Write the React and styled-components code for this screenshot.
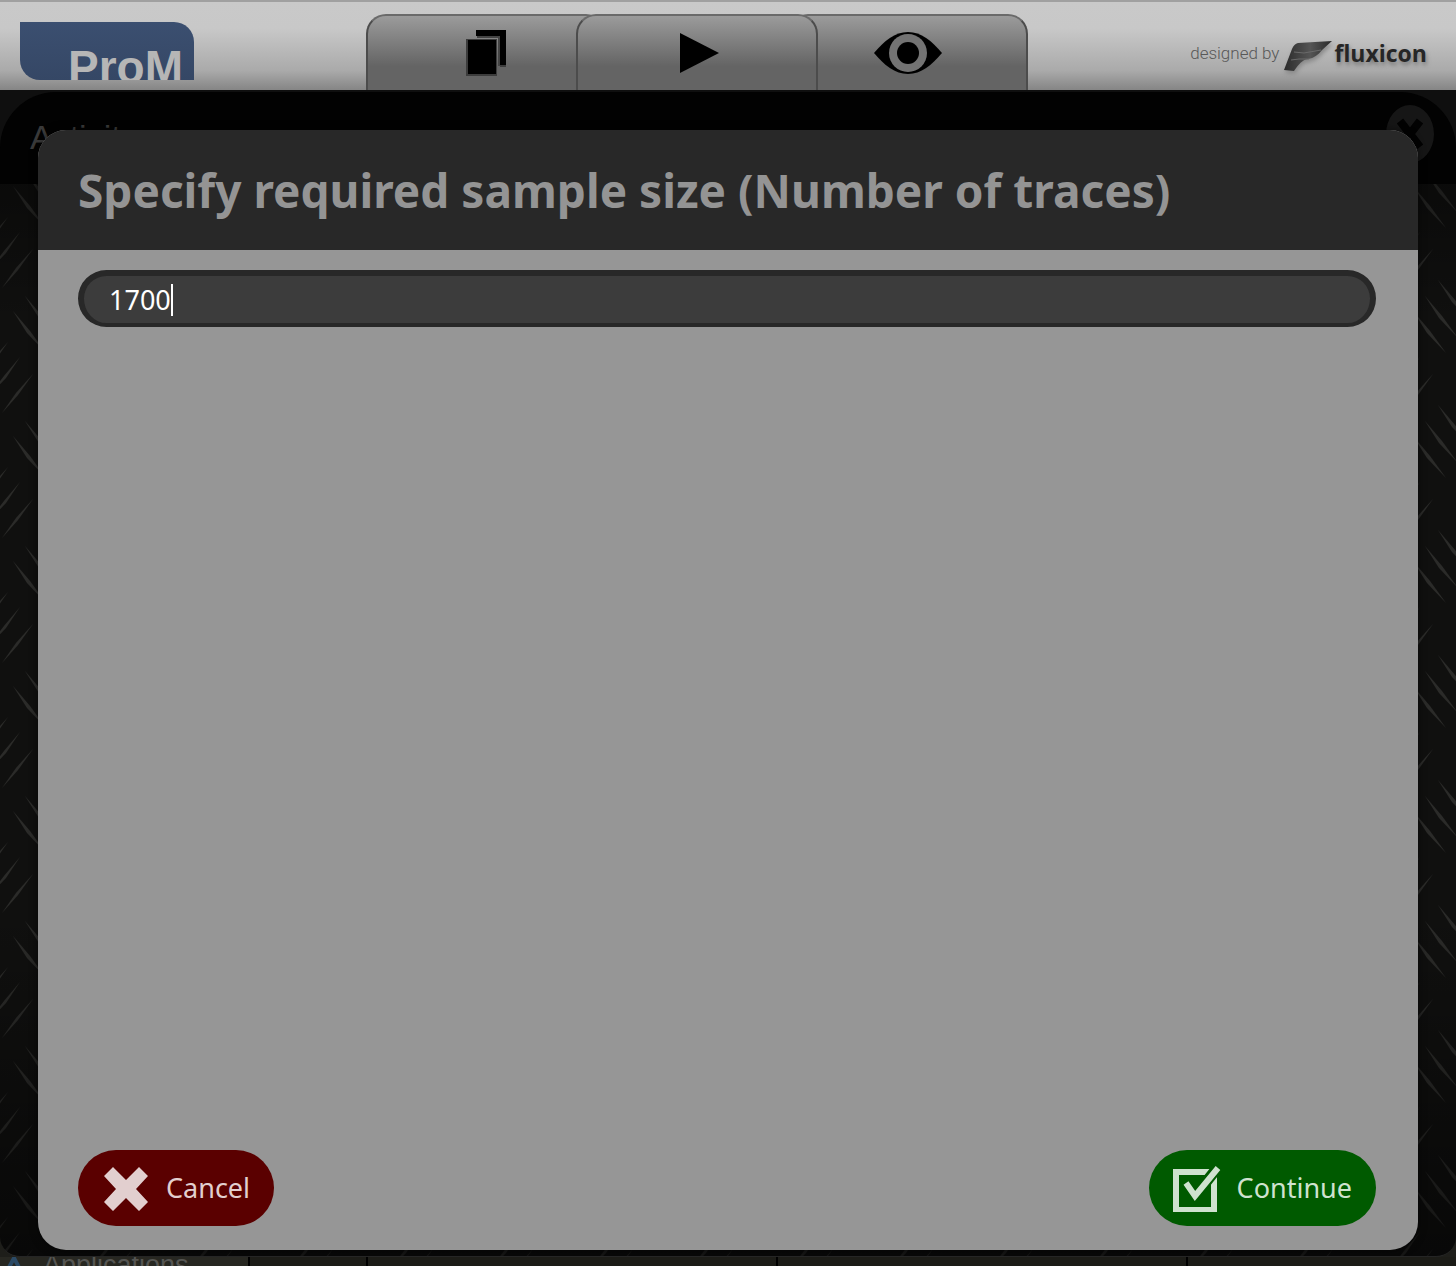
import React, { useState } from 'react';
import styled, { createGlobalStyle } from 'styled-components';

const GlobalStyle = createGlobalStyle`
  * { box-sizing: border-box; }
  body { margin: 0; background: #1e1e1a; font-family: "Noto Sans", "Open Sans", sans-serif; }
  button, input { font: inherit; }
`;

const Page = styled.div`
  display: flex;
  flex-direction: column;
  height: 100vh;
  min-height: 600px;
  overflow: hidden;
`;

const TopBar = styled.header`
  display: flex;
  justify-content: space-between;
  align-items: flex-end;
  flex: none;
  height: 90px;
  padding: 0 29px 0 20px;
  border-top: 2px solid #a0a0a0;
  background: linear-gradient(#c9c9c9 0%, #c8c8c8 30%, #aaaaaa 78%, #858585 100%);
`;

const Logo = styled.div`
  width: 174px;
  height: 58px;
  margin: 0 10px 10px 0;
  padding: 20px 0 0 48px;
  overflow: hidden;
  border-radius: 0 20px 0 20px;
  background: linear-gradient(#3b4f70, #354765);
  color: #b6b6b6;
  font: bold 46px/50px "Liberation Sans", Arial, sans-serif;
`;

const Tabs = styled.nav`
  display: flex;
`;

const Tab = styled.button`
  position: relative;
  z-index: ${(p) => (p.$active ? 1 : 0)};
  display: flex;
  justify-content: center;
  align-items: center;
  width: ${(p) => (p.$active ? '242px' : '240px')};
  height: 76px;
  margin: ${(p) => (p.$active ? '0 -30px' : '0')};
  padding: 0;
  border: solid #4c4c4c;
  border-width: 2px 2px 0;
  border-top-color: #6a6a6a;
  border-radius: 20px 20px 0 0;
  background: linear-gradient(#9b9b9b 0%, #646464 68%, #646464 100%);
`;

const Credit = styled.a`
  display: flex;
  align-items: center;
  height: 74px;
  color: #262626;
  text-decoration: none;
  font: bold 23px/32px "Open Sans", sans-serif;
  text-shadow: 1px 3px 4px #777777;
`;

const CreditPrefix = styled.span`
  margin-right: 5px;
  color: #585858;
  font: 300 17px/32px Roboto, sans-serif;
  text-shadow: none;
`;

const FluxMark = styled.svg`
  margin: 6px 2px 0 0;
  filter: drop-shadow(1px 3px 2px #888888);
`;

const Workspace = styled.main`
  position: relative;
  flex: 1;
  overflow: hidden;
  border-bottom: 1px solid #252525;
  border-radius: 0 0 20px 20px;
  background: #10100f;
`;

const Plate = styled.svg`
  position: absolute;
  inset: 0;
  width: 100%;
  height: 100%;
`;

const ActivityBar = styled.div`
  position: relative;
  height: 94px;
  padding-top: 2px;
  background: #0f0f0f;
`;

const ActivityTitle = styled.div`
  display: flex;
  justify-content: space-between;
  height: 92px;
  padding: 13px 22px 0 30px;
  border-radius: 56px 56px 0 0;
  background: #020202;
  color: #3a3a3a;
  font: 34px/64px "Liberation Sans", Arial, sans-serif;
`;

const CloseButton = styled.button`
  display: grid;
  place-items: center;
  width: 48px;
  height: 58px;
  padding: 0;
  border: 0;
  border-radius: 50%;
  background: #161616;
`;

const Overlay = styled.div`
  position: absolute;
  inset: 0;
  display: flex;
  padding: 40px 38px 6px;
`;

const Dialog = styled.form`
  display: flex;
  flex-direction: column;
  flex: 1;
  overflow: hidden;
  border-radius: 28px;
  background: #969696;
  box-shadow: 0 0 8px rgba(0, 0, 0, 0.5);
`;

const DialogTitle = styled.h1`
  flex: none;
  height: 120px;
  margin: 0;
  padding: 0 40px;
  background: #282828;
  color: #949494;
  font-size: 46px;
  font-weight: 700;
  line-height: 120px;
  white-space: nowrap;
`;

const DialogBody = styled.div`
  display: flex;
  flex-direction: column;
  justify-content: space-between;
  flex: 1;
  padding: 20px 42px 24px 40px;
`;

const Field = styled.label`
  display: flex;
  align-items: center;
  height: 57px;
  padding: 0 25px;
  border: solid #282828;
  border-width: 6px 6px 4px;
  border-radius: 29px;
  background: #3c3c3c;
  cursor: text;
`;

const FieldInput = styled.input`
  field-sizing: content;
  min-width: 0;
  padding: 0;
  border: 0;
  outline: 0;
  background: transparent;
  color: #ffffff;
  caret-color: transparent;
  font-size: 27px;
  line-height: 40px;
`;

const Caret = styled.span`
  width: 2px;
  height: 32px;
  background: #ffffff;
`;

const Actions = styled.div`
  display: flex;
  justify-content: space-between;
`;

const ActionButton = styled.button`
  display: flex;
  align-items: center;
  gap: 16px;
  height: 76px;
  padding: 0 24px;
  border: 0;
  border-radius: 38px;
  background: ${(p) => (p.$confirm ? '#005a00' : '#5a0000')};
  color: ${(p) => (p.$confirm ? '#cfe2cf' : '#e2cfcf')};
  font-size: 27px;
  line-height: 40px;
`;

const Dock = styled.footer`
  display: flex;
  flex: none;
  height: 9px;
  overflow: hidden;
  color: #555552;
  font: 27px/32px "Liberation Sans", Arial, sans-serif;
`;

const DockCell = styled.div`
  display: flex;
  gap: 20px;
  flex: ${(p) => (p.$width ? `0 0 ${p.$width}px` : '1')};
  height: 32px;
  padding-left: 5px;
  border-right: ${(p) => (p.$width ? '2px solid #000000' : '0')};
  background: ${(p) => (p.$light ? '#272721' : '#1c1c17')};
`;

const DockLabel = styled.span`
  margin-top: -8px;
`;

function PagesIcon() {
  return (
    <svg width="40" height="46" viewBox="0 0 40 46" aria-hidden="true">
      <path d="M10 0H40V35H34V6H10Z" fill="#000" />
      <path d="M34 35H40V37H34Z" fill="#3c3c3c" />
      <path d="M11 7H33V36" fill="none" stroke="#444" strokeWidth="2" />
      <path d="M0 9H31V47H0Z" fill="#3c3c3c" />
      <path d="M2 10H30V44H2Z" fill="#000" />
    </svg>
  );
}

function PlayIcon() {
  return (
    <svg width="44" height="40" viewBox="0 0 44 40" aria-hidden="true">
      <path d="M5 0L44 20L5 40Z" fill="#000" />
    </svg>
  );
}

function EyeIcon() {
  return (
    <svg width="68" height="42" viewBox="0 0 68 42" aria-hidden="true">
      <path d="M0 21C10 9 21 0 34 0S58 9 68 21C58 33 47 42 34 42S10 33 0 21Z" fill="#000" />
      <circle cx="34" cy="21" r="19" fill="#737373" />
      <circle cx="34" cy="21" r="11" fill="#000" />
    </svg>
  );
}

function FluxiconMark() {
  return (
    <FluxMark width="48" height="31" viewBox="0 0 48 31" aria-hidden="true">
      <defs>
        <linearGradient id="flux" x1="0" y1="0" x2="1" y2="0">
          <stop offset="0" stopColor="#2b2b2b" />
          <stop offset=".55" stopColor="#555" />
          <stop offset="1" stopColor="#292929" />
        </linearGradient>
      </defs>
      <path d="M14 2L48 0L38 9C34 14 30 17 24 18C18 19 15 23 10 30L0 29L8 8Q10 3 14 2Z" fill="url(#flux)" />
      <path d="M10 11L20 12L37 9M7 19L15 18L25 18" fill="none" stroke="#6a6a6a" strokeWidth="1" />
    </FluxMark>
  );
}

function CrossIcon() {
  return (
    <svg width="48" height="48" viewBox="0 0 48 48" aria-hidden="true">
      <path d="M11 3L24 16L37 3L46 12L34 25L46 38L37 47L24 34L11 47L2 38L14 25L2 12Z" fill="currentColor" />
    </svg>
  );
}

function CheckIcon() {
  return (
    <svg width="48" height="48" viewBox="0 0 48 48" aria-hidden="true">
      <path d="M3 9H41V47H3Z" transform="translate(0 -1)" fill="none" stroke="currentColor" strokeWidth="6" />
      <path d="M13 20L22 32L45 3" fill="none" stroke="#005a00" strokeWidth="11" />
      <path d="M13 19L22 32L45 4" fill="none" stroke="currentColor" strokeWidth="6" />
    </svg>
  );
}

function TreadPlate() {
  return (
    <Plate aria-hidden="true">
      <defs>
        <linearGradient id="shade" x1="0" y1="0" x2="0" y2="1">
          <stop offset="0" stopColor="#000" stopOpacity=".6" />
          <stop offset=".2" stopColor="#000" stopOpacity="0" />
          <stop offset=".7" stopColor="#000" stopOpacity="0" />
          <stop offset="1" stopColor="#000" stopOpacity=".5" />
        </linearGradient>
        <pattern id="tread" width="100" height="125" patternUnits="userSpaceOnUse" y="34">
          <g fill="#2b2b29">
            <path d="M2 39L16 19L33 0L18 21Z" />
            <path d="M-13 24L4 2L20 -17L6 4ZM-13 149L4 127L20 108L6 129Z" />
            <path d="M-24 132L-8 111L8 93L-6 113ZM87 24L104 2L120 -17L106 4ZM87 149L104 127L120 108L106 129ZM76 132L92 111L108 93L94 113Z" />
            <path d="M13 62L30 82L46 104L27 84Z" />
            <path d="M25 47L42 67L58 89L39 69Z" />
            <path d="M38 31L55 51L71 73L52 53Z" />
          </g>
        </pattern>
      </defs>
      <rect width="100%" height="100%" fill="url(#tread)" />
      <rect width="100%" height="100%" fill="url(#shade)" />
    </Plate>
  );
}

export default function App() {
  const [size, setSize] = useState('1700');
  return (
    <Page>
      <GlobalStyle />
      <TopBar>
        <Logo>ProM</Logo>
        <Tabs>
          <Tab type="button" aria-label="Workspace"><PagesIcon /></Tab>
          <Tab type="button" aria-label="Actions" $active><PlayIcon /></Tab>
          <Tab type="button" aria-label="Views"><EyeIcon /></Tab>
        </Tabs>
        <Credit href="#">
          <CreditPrefix>designed by</CreditPrefix>
          <FluxiconMark />
          fluxicon
        </Credit>
      </TopBar>
      <Workspace>
        <TreadPlate />
        <ActivityBar>
          <ActivityTitle>
            Activity
            <CloseButton type="button" aria-label="Close">
              <svg width="28" height="34" viewBox="0 0 28 34" aria-hidden="true">
                <path d="M4 4L24 30M24 4L4 30" stroke="#020202" strokeWidth="8" />
              </svg>
            </CloseButton>
          </ActivityTitle>
        </ActivityBar>
        <Overlay>
          <Dialog role="dialog" aria-labelledby="dialog-title" onSubmit={(e) => e.preventDefault()}>
            <DialogTitle id="dialog-title">Specify required sample size (Number of traces)</DialogTitle>
            <DialogBody>
              <Field>
                <FieldInput
                  aria-labelledby="dialog-title"
                  value={size}
                  onChange={(e) => setSize(e.target.value)}
                />
                <Caret />
              </Field>
              <Actions>
                <ActionButton type="button"><CrossIcon />Cancel</ActionButton>
                <ActionButton type="submit" $confirm><CheckIcon />Continue</ActionButton>
              </Actions>
            </DialogBody>
          </Dialog>
        </Overlay>
      </Workspace>
      <Dock>
        <DockCell $width={250} $light>
          <svg width="18" height="20" viewBox="0 0 18 20" aria-hidden="true">
            <path d="M1 16L9 1L17 16" fill="none" stroke="#2b4a66" strokeWidth="4" />
          </svg>
          <DockLabel>Applications</DockLabel>
        </DockCell>
        <DockCell $width={118} />
        <DockCell $width={410} />
        <DockCell $width={410} />
        <DockCell />
      </Dock>
    </Page>
  );
}
